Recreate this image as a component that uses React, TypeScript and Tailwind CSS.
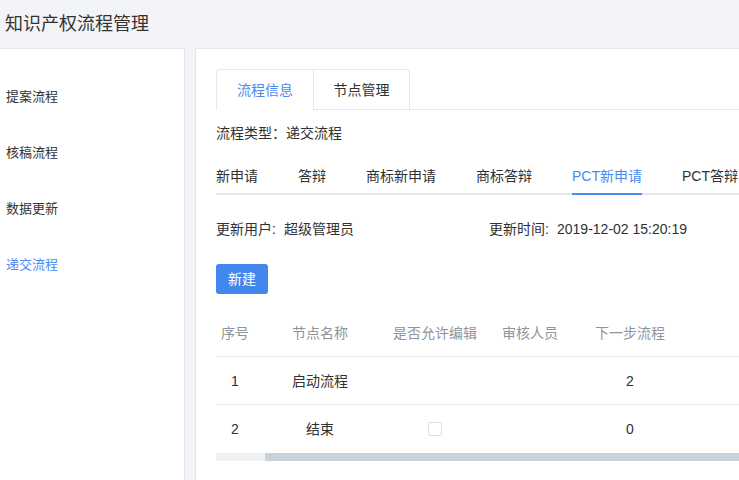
const sideItems = ["提案流程", "核稿流程", "数据更新", "递交流程"];
const subTabs = ["新申请", "答辩", "商标新申请", "商标答辩", "PCT新申请", "PCT答辩"];
const cols = "grid grid-cols-[38px_132px_98px_92px_108px_200px]";

export default function App() {
  return (
    <div className="w-[739px] h-[480px] overflow-hidden bg-[#f3f4f8] text-[#303133] font-['Liberation_Sans','Noto_Sans_CJK_SC',sans-serif]">
      <header className="h-12 flex items-center pl-[5px] text-[18px] text-[#333]">知识产权流程管理</header>
      <div className="flex gap-[10px] h-[432px]">
        <aside className="w-[185px] shrink-0 bg-white border border-l-0 border-b-0 border-[#e4e6ec] pt-5">
          {sideItems.map((s, i) => (
            <div
              key={s}
              className={`h-14 flex items-center pl-[6px] text-[13px] leading-5 ${i === 3 ? "text-[#4a89f0]" : "text-[#333]"}`}
            >
              {s}
            </div>
          ))}
        </aside>
        <main className="w-[600px] shrink-0 bg-white border border-r-0 border-b-0 border-[#e4e6ec] pl-5 pt-5 text-[14px] leading-5">
          <div className="flex border-b border-[#e4e7ed]">
            <div className="flex -mb-px border border-b-0 border-[#e4e7ed] rounded-t-[4px]">
              <div className="w-[96px] h-10 flex items-center justify-center text-[#4a89f0] border-b border-white">流程信息</div>
              <div className="w-[96px] h-10 flex items-center justify-center border-l border-b border-[#e4e7ed]">节点管理</div>
            </div>
          </div>

          <div className="mt-[13px]">流程类型：递交流程</div>

          <div className="mt-[23px] flex gap-10 border-b-2 border-[#e4e7ed]">
            {subTabs.map((t, i) => (
              <div
                key={t}
                className={`shrink-0 pb-[7px] -mb-[2px] border-b-2 ${i === 4 ? "border-[#4a89f0] text-[#4a89f0]" : "border-transparent"}`}
              >
                {t}
              </div>
            ))}
          </div>

          <div className="mt-6 flex">
            <span className="w-[68px]">更新用户:</span>
            <span className="w-[205px]">超级管理员</span>
            <span className="w-[68px]">更新时间:</span>
            <span>2019-12-02 15:20:19</span>
          </div>

          <button className="mt-[25px] w-[52px] h-[30px] rounded-[3px] bg-[#4287ec] text-white flex items-center justify-center">
            新建
          </button>

          <div className="mt-[15px]">
            <div className={`${cols} h-12 items-center text-center border-b border-[#ebeef5] text-[#909399]`}>
              <span>序号</span>
              <span>节点名称</span>
              <span>是否允许编辑</span>
              <span>审核人员</span>
              <span>下一步流程</span>
              <span></span>
            </div>
            <div className={`${cols} h-12 items-center text-center border-b border-[#ebeef5]`}>
              <span>1</span>
              <span>启动流程</span>
              <span></span>
              <span></span>
              <span>2</span>
              <span></span>
            </div>
            <div className={`${cols} h-12 items-center text-center`}>
              <span>2</span>
              <span>结束</span>
              <span className="flex justify-center">
                <span className="w-[14px] h-[14px] border border-[#dcdfe6] rounded-[2px] bg-white" />
              </span>
              <span></span>
              <span>0</span>
              <span></span>
            </div>
            <div className="h-2 bg-[#eef0f2] flex">
              <div className="ml-[49px] flex-1 bg-[#c9d2db]" />
            </div>
          </div>
        </main>
      </div>
    </div>
  );
}
